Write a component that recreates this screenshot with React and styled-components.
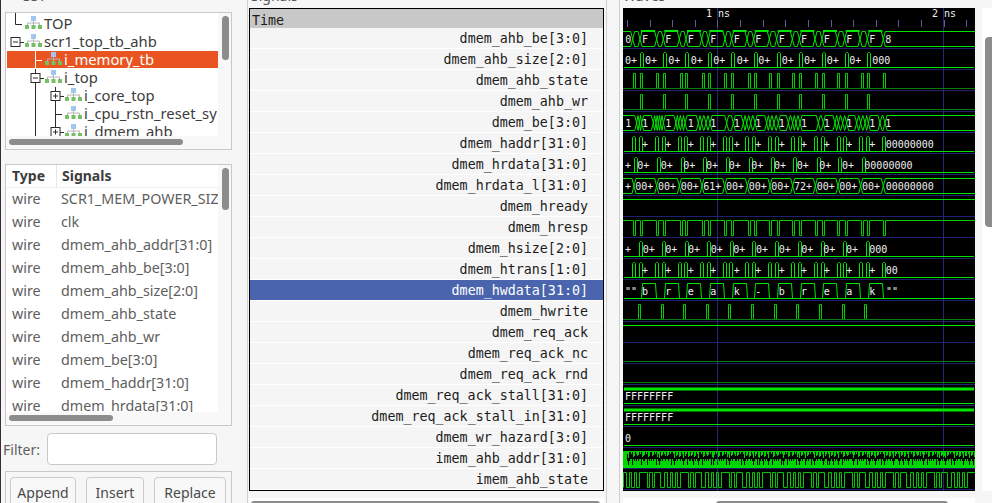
import React from 'react';
import styled, { createGlobalStyle } from 'styled-components';

const Global = createGlobalStyle`
  html, body { margin: 0; padding: 0; background: #f6f6f7; }
  #root { width: 992px; height: 503px; overflow: hidden; }
`;

const UI = `"Noto Sans", "Open Sans", sans-serif`;
const MONO = `"DejaVu Sans Mono", "Liberation Mono", monospace`;

const Page = styled.div`
  display: flex;
  width: 992px;
  height: 503px;
  overflow: hidden;
  background: #f6f6f7;
  border-left: 1px solid #3a2a3a;
  box-sizing: border-box;
  font-family: ${UI};
  color: #3d3d3d;
`;
const LeftPane = styled.div`
  flex: none;
  width: 245px;
  padding: 0 14px 0 2px;
  box-sizing: border-box;
  display: flex;
  flex-direction: column;
`;
const PaneLabel = styled.div`
  height: 16px;
  line-height: 16px;
  margin-top: -12px;
  margin-left: ${p => p.$indent}px;
  font-size: 14px;
  color: #555;
`;
const Frame = styled.div`
  margin: ${p => p.$top}px 0 0 2px;
  height: ${p => p.$height}px;
  flex: none;
  box-sizing: border-box;
  border: 1px solid #c8c8c8;
  background: #fff;
  display: grid;
  grid-template-columns: 1fr 13px;
  grid-template-rows: 1fr 13px;
  overflow: hidden;
`;
const FrameBody = styled.div`
  overflow: hidden;
  min-width: 0;
`;
const VTrack = styled.div`
  background: #f8f8f8;
  padding: ${p => p.$offset}px 2px 0 4px;
`;
const VThumb = styled.div`
  height: ${p => p.$len}px;
  border-radius: 4px;
  background: #8c8c8c;
`;
const HTrack = styled.div`
  grid-column: 1 / 3;
  background: #f8f8f8;
  padding: 3px 0 0 3px;
`;
const HThumb = styled.div`
  width: ${p => p.$len}px;
  height: 6px;
  border-radius: 3px;
  background: #8c8c8c;
`;
const TreeList = styled.div`
  padding-top: 2px;
`;
const TreeRow = styled.div`
  display: flex;
  align-items: center;
  height: ${p => (p.$active ? 17 : 18)}px;
  margin-bottom: ${p => (p.$active ? 1 : 0)}px;
  margin-left: 1px;
  background: ${p => (p.$active ? '#e95420' : 'transparent')};
  color: ${p => (p.$active ? '#fff' : '#3d3d3d')};
  font-size: 14.8px;
  white-space: nowrap;
`;
const TreeLabel = styled.span`
  padding-bottom: 2px;
`;
const Gutter = styled.svg`
  flex: none;
  display: block;
  overflow: visible;
  margin-right: 2px;
`;
const ListHead = styled.div`
  display: grid;
  grid-template-columns: 50px 1fr;
  height: 22px;
  align-items: center;
  font-size: 14px;
  font-weight: 700;
  border-bottom: 1px solid #eee;
`;
const HeadCell = styled.div`
  padding-left: ${p => p.$pad}px;
  height: 100%;
  line-height: 21px;
  border-left: ${p => (p.$sep ? '1px solid #e6e6e6' : 'none')};
  box-sizing: border-box;
`;
const ListRow = styled.div`
  display: grid;
  grid-template-columns: 50px 1fr;
  height: 23px;
  box-sizing: border-box;
  padding-bottom: 2px;
  align-items: center;
  font-size: 14.3px;
  color: #5e5e5e;
  white-space: nowrap;
`;
const ListCell = styled.div`
  padding-left: ${p => p.$pad}px;
  overflow: hidden;
`;
const FilterRow = styled.div`
  display: flex;
  align-items: center;
  margin-top: 7px;
  height: 34px;
  font-size: 14px;
  color: #5e5e5e;
`;
const FilterLabel = styled.label`
  width: 44px;
  flex: none;
`;
const FilterInput = styled.div`
  width: 170px;
  height: 32px;
  box-sizing: border-box;
  border: 1px solid #c8c8c8;
  border-radius: 4px;
  background: #fff;
`;
const ButtonBox = styled.div`
  margin: 6px 0 0 2px;
  flex: 1;
  border: 1px solid #c8c8c8;
  border-bottom: none;
  padding: 5px 4px 0;
  display: flex;
  gap: 10px;
`;
const Button = styled.div`
  width: ${p => p.$w}px;
  height: 40px;
  flex: none;
  box-sizing: border-box;
  border: 1px solid #cfcac6;
  border-radius: 4px;
  background: #f8f8f8;
  text-align: center;
  font-size: 14px;
  line-height: 29px;
  color: #4a4a4a;
`;
const MidPane = styled.div`
  flex: none;
  width: 360px;
  box-sizing: border-box;
  border-left: 1px solid #d0d0d0;
  border-right: 1px solid #d0d0d0;
  margin-left: 1px;
  padding: 0 2px 0 1px;
  display: flex;
  flex-direction: column;
`;
const SignalFrame = styled.div`
  margin-top: 4px;
  flex: none;
  height: 483px;
  box-sizing: border-box;
  border: 1px solid #000;
  background: #f5f5f5;
  font: 13.33px ${MONO};
  color: #1c1c1c;
  overflow: hidden;
`;
const TimeHead = styled.div`
  height: 19px;
  line-height: 23px;
  padding-left: 2px;
  background: #c8c8c8;
`;
const SigRow = styled.div`
  height: 21px;
  box-sizing: border-box;
  border-bottom: 1px solid #fff;
  line-height: 22px;
  padding-right: 15px;
  text-align: right;
  background: ${p => (p.$sel ? '#4a65ad' : '#f5f5f5')};
  color: ${p => (p.$sel ? '#fff' : '#1c1c1c')};
`;
const BottomTrack = styled.div`
  flex: 1;
  margin-top: 7px;
  background: #fff;
  padding: 3px 0 0 ${p => p.$pad}px;
`;
const BottomThumb = styled.div`
  width: ${p => p.$len}px;
  height: 6px;
  border-radius: 3px;
  background: #8c8c8c;
`;
const RightPane = styled.div`
  flex: 1;
  min-width: 0;
  margin-left: 12px;
  border-left: 1px solid #d0d0d0;
  padding-left: 3px;
  display: flex;
  flex-direction: column;
`;
const WaveRow = styled.div`
  display: flex;
  flex: none;
  height: 483px;
  margin-top: 4px;
`;
const WaveSvg = styled.svg`
  display: block;
  flex: none;
  background: #000;
`;
const WaveScroll = styled.div`
  margin-left: 7px;
  flex: 1;
  background: #fff;
  padding: 29px 0 0 3px;
`;
const WaveThumb = styled.div`
  height: 190px;
  border-radius: 4px 0 0 4px;
  background: #8c8c8c;
`;
const WaveBottom = styled.div`
  width: 352px;
  flex: 1;
  margin-top: 7px;
  background: #fff;
  padding: 3px 0 0 93px;
  box-sizing: border-box;
`;

function HierIcon({ x }) {
  const g = '#74c067';
  return (
    <g transform={`translate(${x},0)`}>
      <rect x="6" y="1" width="5" height="5" fill="#a3c6ee" />
      <path d="M8.5 6v2M2.5 10V8h12v2M8.5 8v2" stroke="#b5b5b5" fill="none" />
      <rect x="0" y="10" width="4" height="4" fill={g} />
      <rect x="6.5" y="10" width="4" height="4" fill={g} />
      <rect x="13" y="10" width="4" height="4" fill={g} />
    </g>
  );
}

function ExpBox({ x, plus, c }) {
  return (
    <g>
      <rect x={x - 4.5} y="4.5" width="9" height="9" fill="#fff" stroke={c} />
      <path d={`M${x - 2.5} 9h5${plus ? `M${x} 6.5v5` : ''}`} stroke={c} />
    </g>
  );
}

const treeRows = [
  { d: 0, label: 'TOP', kind: 'tee' },
  { d: 0, label: 'scr1_top_tb_ahb', kind: 'minus' },
  { d: 1, label: 'i_memory_tb', kind: 'tee', active: true },
  { d: 1, label: 'i_top', kind: 'minus' },
  { d: 2, label: 'i_core_top', kind: 'plus' },
  { d: 2, label: 'i_cpu_rstn_reset_sy', kind: 'tee' },
  { d: 2, label: 'i_dmem_ahb', kind: 'plus' },
];

function TreeGuide({ row }) {
  const { d, kind, active } = row;
  const c = active ? '#fff' : '#2b2b2b';
  const bx = 8 + 20 * d;
  const w = 35 + 20 * d;
  const iconX = 18 + 20 * d;
  return (
    <Gutter width={w} height="18" viewBox={`0 0 ${w} 18`}>
      {d >= 1 && <path d="M28.5 0V18" stroke={c} />}
      {d >= 2 && <path d="M48.5 0V18" stroke={c} />}
      {kind === 'tee' && d === 0 && <path d={`M${bx + .5} -3V9.5H${bx + 7}`} stroke={c} fill="none" />}
      {kind === 'tee' && d > 0 && <path d={`M${bx + .5} 9.5H${bx + 7}`} stroke={c} fill="none" />}
      {kind === 'minus' && <ExpBox x={bx + .5} c={c} />}
      {kind === 'plus' && <ExpBox x={bx + .5} plus c={c} />}
      {kind !== 'tee' && <path d={`M${bx + 5} 9.5H${bx + 9}`} stroke={c} />}
      <HierIcon x={iconX} />
    </Gutter>
  );
}

const listRows = [
  'SCR1_MEM_POWER_SIZE', 'clk', 'dmem_ahb_addr[31:0]', 'dmem_ahb_be[3:0]', 'dmem_ahb_size[2:0]',
  'dmem_ahb_state', 'dmem_ahb_wr', 'dmem_be[3:0]', 'dmem_haddr[31:0]', 'dmem_hrdata[31:0]',
];

const signals = [
  'dmem_ahb_be[3:0]', 'dmem_ahb_size[2:0]', 'dmem_ahb_state', 'dmem_ahb_wr', 'dmem_be[3:0]',
  'dmem_haddr[31:0]', 'dmem_hrdata[31:0]', 'dmem_hrdata_l[31:0]', 'dmem_hready', 'dmem_hresp',
  'dmem_hsize[2:0]', 'dmem_htrans[1:0]', 'dmem_hwdata[31:0]', 'dmem_hwrite', 'dmem_req_ack',
  'dmem_req_ack_nc', 'dmem_req_ack_rnd', 'dmem_req_ack_stall[31:0]', 'dmem_req_ack_stall_in[31:0]',
  'dmem_wr_hazard[3:0]', 'imem_ahb_addr[31:0]', 'imem_ahb_state',
];

/* waveform geometry, in zoomed (3x) units from x = 620 */
const X = z => 620 + z / 3;
const PX = z => Math.round(X(z)) + .5;
const B = [60, 128, 196, 265, 333, 401, 470, 538, 606, 674, 742];
const BRIGHT = '#00e600';
const DIM = '#0a7d0a';
const SEP = '#20206e';

const hi = n => 27 + 21 * n + 4.5;
const lo = n => 27 + 21 * n + 19.5;

function busPath(n, zs, zEnd = 1090) {
  const t = hi(n), b = lo(n);
  const pts = [-12, ...zs, zEnd];
  let d = '';
  for (let i = 0; i < pts.length - 1; i++) {
    const a = X(pts[i]), e = X(pts[i + 1]);
    const s = Math.min(2, (e - a) / 2);
    d += `M${a} ${(t + b) / 2}L${a + s} ${t}H${e - s}L${e} ${(t + b) / 2}L${e - s} ${b}H${a + s}Z`;
  }
  return d;
}
function humps(n, zs) {
  const t = hi(n), b = lo(n);
  let d = `M${X(12)} ${b}H${X(1062)}`;
  for (let i = 0; i < zs.length; i += 2) {
    d += `M${PX(zs[i])} ${b}L${PX(zs[i]) + 1} ${t}H${PX(zs[i + 1]) - 1}L${PX(zs[i + 1])} ${b}`;
  }
  return d;
}
function spikes(n, zs) {
  const t = hi(n), b = lo(n);
  let d = `M${X(12)} ${b}H${X(1062)}`;
  zs.forEach(z => {
    const x = PX(z);
    d += `M${x} ${b}V${t + 1}M${x + 3} ${b}V${t + 1}M${x} ${t + 1}L${x + 1} ${t}H${x + 2}L${x + 3} ${t + 1}`;
  });
  return d;
}
function pulses(n, zs, w = 2) {
  const t = hi(n), b = lo(n);
  let d = `M623 ${b}`;
  zs.forEach(z => {
    const x = PX(z);
    d += `H${x}V${t}H${x + w}V${b}`;
  });
  return d;
}
function inverted(n, zs, w = 2) {
  const t = hi(n), b = lo(n);
  let d = `M623 ${t}`;
  zs.forEach(z => {
    const x = PX(z);
    d += `H${x}V${b}H${x + w}V${t}`;
  });
  return d + `H975`;
}
const PAIRS = [40, 60, 108, 128, 180, 196, 245, 265, 313, 333, 383, 401, 448, 470, 517, 538, 585, 606, 652, 674, 722, 742, 790];
const F_BOUNDS = [38, 60, 110, 130, 178, 198, 245, 265, 315, 335, 381, 401, 448, 470, 517, 538, 585, 606, 652, 674, 720, 742, 790];
const DBL = [35, 58, 105, 125, 173, 193, 240, 262, 308, 328, 376, 397, 445, 465, 513, 533, 582, 602, 650, 670, 717, 737, 785];
const TXT = [75, 145, 212, 280, 350, 415, 485, 552, 620, 688, 757];
const BE_CLUSTER = [50, 58, 65, 100, 108, 115, 122, 130, 168, 176, 186, 195, 235, 245, 258, 270, 320, 340, 370, 380, 392, 405, 440, 450, 462, 475, 505, 518, 528, 540, 595, 610, 645, 655, 668, 680, 710, 722, 735, 745, 780, 795];

const hzBounds = [42, 110, 178, 246, 314, 382, 450, 518, 586, 654, 722, 790];
const wdBounds = [64, 108, 132, 176, 198, 244, 267, 311, 336, 382, 402, 448, 470, 516, 540, 584, 607, 652, 675, 721, 744, 790];

function denseAddr() {
  const t = 451, mid = 459, b = 466;
  let d = `M623 ${t + .5}H975`;
  for (let x = 623; x < 975; x++) {
    const r = (x * 13 + (x % 7) * 5 + (x % 23) * 3) % 11;
    if (x < 627) d += `M${x + .5} ${t}V${b}`;
    if (r % 3 !== 0) d += `M${x + .5} ${t}V${t + 3 + (r % 5)}`;
    if (r !== 4 && r !== 9) d += `M${x + .5} ${mid + (r % 2) * 2}V${b}`;
  }
  return d;
}
function denseState() {
  const t = 472.5, b = 487.5;
  const pat = [3, 3, 2, 3, 2, 3, 8, 2, 3, 2, 6, 4];
  let x = 623.5, up = true;
  let d = `M623.5 ${b}`;
  let i = 0;
  while (x < 975) {
    d += `V${up ? t : b}`;
    x += pat[i % pat.length];
    d += `H${Math.min(x, 975)}`;
    up = !up;
    i++;
  }
  return d;
}

const T = ({ z, n, children, x }) => (
  <text x={x ?? X(z)} y={27 + 21 * n + 16}>{children}</text>
);

function Waves() {
  const ticks = [];
  for (let i = 0; i < 16; i++) ticks.push(627 + i * 22.62);
  const seps = [];
  for (let n = 0; n < 22; n++) seps.push(48.5 + 21 * n);
  return (
    <WaveSvg width="352" height="483" viewBox="623 8 352 483">
      <g stroke={SEP} fill="none">
        {seps.map(y => <path key={y} d={`M623 ${y}H975`} />)}
        <path d="M717.5 8V491M943.5 8V491" stroke="#26267a" />
      </g>
      <path d={ticks.map(x => `M${Math.round(x) + .5} 20V27`).join('')} stroke="#5c5c96" />

      <g fill="none" stroke={BRIGHT} strokeWidth="1">
        <path d={busPath(0, F_BOUNDS)} />
        <path d={F_BOUNDS.filter((_, i) => i % 2 === 1).map(z => `M${X(z + 3)} 31H${X(z + 45)}`).join('')} strokeWidth="2" />
        <path d={spikes(1, B)} />
        <path d={pulses(2, PAIRS)} stroke="#00d000" />
        <path d={`M623 ${lo(2)}H975`} stroke={DIM} />
        <path d={pulses(3, B)} stroke="#00d000" />
        <path d={`M623 ${lo(3)}H975`} stroke={DIM} />
        <path d={busPath(4, BE_CLUSTER)} />
        <path d={spikes(5, DBL)} />
        <path d={spikes(6, [42, 112, 182, 250, 318, 388, 452, 520, 590, 655, 725])} />
        <path d={busPath(7, hzBounds)} />
        <path d={`M623 ${hi(8)}H975`} />
        <path d={inverted(9, PAIRS)} stroke="#00d000" />
        <path d={spikes(10, [58, 125, 195, 262, 330, 397, 465, 533, 602, 668, 737])} />
        <path d={spikes(11, DBL)} />
        <path d={humps(12, wdBounds)} />
        <path d={pulses(13, [55, 122, 190, 258, 325, 394, 462, 528, 598, 667, 733])} stroke="#00d000" />
        <path d={`M623 ${lo(13)}H975`} stroke={DIM} />
        <path d={`M623 ${hi(14)}H975`} />
        <path d={`M623 ${lo(15)}H975`} stroke={DIM} />
        <path d={`M623 ${lo(16)}H975`} stroke={DIM} />
        <path d={`M624 389H974`} strokeWidth="3" />
        <path d={`M624 403.5H974`} />
        <path d={`M624 410H974`} strokeWidth="3" />
        <path d={`M624 424.5H974`} />
        <path d={`M624 445.5H974`} />
        <path d={denseAddr()} stroke="#00d400" />
        <path d="M623 466.5H975" strokeWidth="3" stroke="#00dc00" />
        <path d={denseState()} stroke="#00c800" />
      </g>

      <g fill="#e8e8e8" fontFamily={MONO} fontSize="10" textAnchor="middle" style={{ whiteSpace: 'pre' }}>
        {TXT.map(z => <T key={z} z={z} n={0}>F</T>)}
        <T z={25} n={0}>0</T>
        <T z={805} n={0}>8</T>
      </g>
      <g fill="#f0f0f0" fontFamily={MONO} fontSize="10" style={{ whiteSpace: 'pre' }}>
        <text x="706" y="17">1 ns</text>
        <text x="932" y="17">2 ns</text>
        <T x={625} n={1}>0+</T>
        {TXT.slice(0, 10).map(z => <T key={z} x={X(z)} n={1}>0+</T>)}
        <T x={X(757)} n={1}>000</T>
        {[25, 75, 145, 212, 280, 350, 415, 485, 552, 620, 688, 757, 805].map(z => (
          <T key={z} x={X(z) - 3} n={4}>1</T>
        ))}
        {TXT.map(z => <T key={z} x={X(z) - 3} n={5}>+</T>)}
        <T x={X(797)} n={5}>00000000</T>
        <T x={625} n={6}>+</T>
        {[52, 122, 190, 258, 326, 394, 462, 530, 598, 666].map(z => <T key={z} x={X(z)} n={6}>0+</T>)}
        <T x={X(733)} n={6}>00000000</T>
        <T x={625} n={7}>+</T>
        {['00+', '00+', '00+', '61+', '00+', '00+', '00+', '72+', '00+', '00+', '00+'].map((s, i) => (
          <T key={i} x={X(46 + i * 68)} n={7}>{s}</T>
        ))}
        <T x={X(797)} n={7}>00000000</T>
        <T x={625} n={10}>+</T>
        {[68, 136, 204, 272, 340, 408, 476, 544, 610, 678].map(z => <T key={z} x={X(z)} n={10}>0+</T>)}
        <T x={X(748)} n={10}>000</T>
        {TXT.map(z => <T key={z} x={X(z) - 3} n={11}>+</T>)}
        <T x={X(797)} n={11}>00</T>
        <T x={625} n={12}>""</T>
        {['b', 'r', 'e', 'a', 'k', '-', 'b', 'r', 'e', 'a', 'k'].map((s, i) => (
          <T key={i} x={X(TXT[i]) - 3} n={12}>{s}</T>
        ))}
        <T x={X(798)} n={12}>""</T>
        <T x={625} n={17}>FFFFFFFF</T>
        <T x={625} n={18}>FFFFFFFF</T>
        <T x={625} n={19}>0</T>
      </g>
    </WaveSvg>
  );
}

export default function App() {
  return (
    <>
      <Global />
      <Page>
        <LeftPane>
          <PaneLabel $indent={20}>SST</PaneLabel>
          <Frame $top={8} $height={138}>
            <FrameBody>
              <TreeList>
                {treeRows.map(r => (
                  <TreeRow key={r.label} $active={r.active}>
                    <TreeGuide row={r} />
                    <TreeLabel>{r.label}</TreeLabel>
                  </TreeRow>
                ))}
              </TreeList>
            </FrameBody>
            <VTrack $offset={3}><VThumb $len={44} /></VTrack>
            <HTrack><HThumb $len={174} /></HTrack>
          </Frame>
          <Frame $top={14} $height={262}>
            <FrameBody>
              <ListHead>
                <HeadCell $pad={6}>Type</HeadCell>
                <HeadCell $pad={5} $sep>Signals</HeadCell>
              </ListHead>
              {listRows.map(s => (
                <ListRow key={s}>
                  <ListCell $pad={6}>wire</ListCell>
                  <ListCell $pad={5}>{s}</ListCell>
                </ListRow>
              ))}
            </FrameBody>
            <VTrack $offset={3}><VThumb $len={42} /></VTrack>
            <HTrack><HThumb $len={104} /></HTrack>
          </Frame>
          <FilterRow>
            <FilterLabel>Filter:</FilterLabel>
            <FilterInput />
          </FilterRow>
          <ButtonBox>
            <Button $w={66}>Append</Button>
            <Button $w={58}>Insert</Button>
            <Button $w={72}>Replace</Button>
          </ButtonBox>
        </LeftPane>
        <MidPane>
          <PaneLabel $indent={2}>Signals</PaneLabel>
          <SignalFrame>
            <TimeHead>Time</TimeHead>
            {signals.map(s => <SigRow key={s} $sel={s === 'dmem_hwdata[31:0]'}>{s}</SigRow>)}
          </SignalFrame>
          <BottomTrack $pad={2}><BottomThumb $len={349} /></BottomTrack>
        </MidPane>
        <RightPane>
          <PaneLabel $indent={0}>Waves</PaneLabel>
          <WaveRow>
            <Waves />
            <WaveScroll><WaveThumb /></WaveScroll>
          </WaveRow>
          <WaveBottom><BottomThumb $len={232} /></WaveBottom>
        </RightPane>
      </Page>
    </>
  );
}
